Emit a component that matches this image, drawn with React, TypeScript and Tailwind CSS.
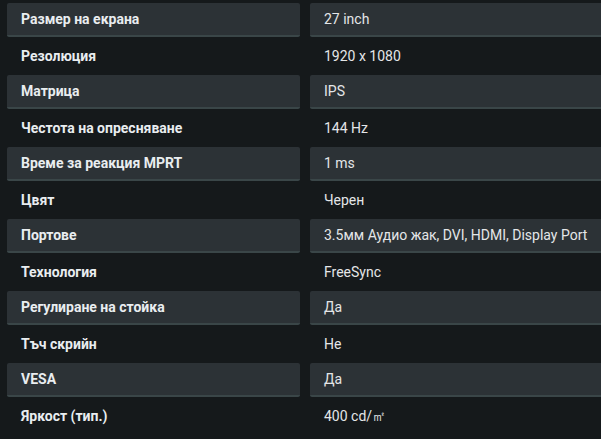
const specs = [
  { label: "Размер на екрана", value: "27 inch" },
  { label: "Резолюция", value: "1920 x 1080" },
  { label: "Матрица", value: "IPS" },
  { label: "Честота на опресняване", value: "144 Hz" },
  { label: "Време за реакция MPRT", value: "1 ms" },
  { label: "Цвят", value: "Черен" },
  { label: "Портове", value: "3.5мм Аудио жак, DVI, HDMI, Display Port" },
  { label: "Технология", value: "FreeSync" },
  { label: "Регулиране на стойка", value: "Да" },
  { label: "Тъч скрийн", value: "Не" },
  { label: "VESA", value: "Да" },
  { label: "Яркост (тип.)", value: "400 cd/㎡" },
]

const App = () => {
  return (
    <div
      className="w-[601px] h-[439px] overflow-hidden bg-[#15191b] pt-[2px] pl-[7px] text-[14px]"
      style={{ fontFamily: "Roboto, 'Noto Sans', sans-serif" }}
    >
      <div className="grid grid-cols-[293px_320px] gap-x-[10px]">
        {specs.map((row, i) => {
          const shaded = i % 2 === 0
          const cell = shaded
            ? "bg-[#2c3236] border-b-2 border-[#3a4648] rounded-[2px]"
            : ""
          return (
            <div key={row.label} className="contents">
              <div className="h-[36px] py-[1px]">
                <div className={`h-full flex items-center px-[14px] pt-[1px] font-bold text-[#e9edf0] ${cell}`}>
                  {row.label}
                </div>
              </div>
              <div className="h-[36px] py-[1px]">
                <div className={`h-full flex items-center px-[14px] pt-[1px] text-[#e4e6e8] ${cell}`}>
                  {row.value}
                </div>
              </div>
            </div>
          )
        })}
      </div>
    </div>
  )
}

export default App
